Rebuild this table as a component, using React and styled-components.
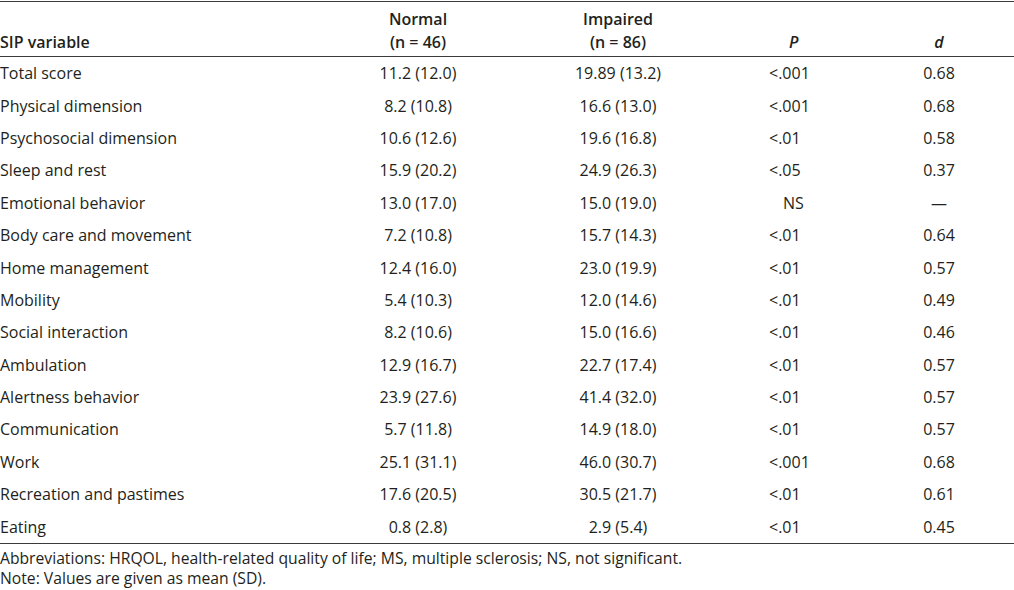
import React from 'react'
import styled, { createGlobalStyle } from 'styled-components'

const rows = [
    ['Total score', '11.2 (12.0)', '19.89 (13.2)', '<.001', '0.68'],
    ['Physical dimension', '8.2 (10.8)', '16.6 (13.0)', '<.001', '0.68'],
    ['Psychosocial dimension', '10.6 (12.6)', '19.6 (16.8)', '<.01', '0.58'],
    ['Sleep and rest', '15.9 (20.2)', '24.9 (26.3)', '<.05', '0.37'],
    ['Emotional behavior', '13.0 (17.0)', '15.0 (19.0)', 'NS', '—'],
    ['Body care and movement', '7.2 (10.8)', '15.7 (14.3)', '<.01', '0.64'],
    ['Home management', '12.4 (16.0)', '23.0 (19.9)', '<.01', '0.57'],
    ['Mobility', '5.4 (10.3)', '12.0 (14.6)', '<.01', '0.49'],
    ['Social interaction', '8.2 (10.6)', '15.0 (16.6)', '<.01', '0.46'],
    ['Ambulation', '12.9 (16.7)', '22.7 (17.4)', '<.01', '0.57'],
    ['Alertness behavior', '23.9 (27.6)', '41.4 (32.0)', '<.01', '0.57'],
    ['Communication', '5.7 (11.8)', '14.9 (18.0)', '<.01', '0.57'],
    ['Work', '25.1 (31.1)', '46.0 (30.7)', '<.001', '0.68'],
    ['Recreation and pastimes', '17.6 (20.5)', '30.5 (21.7)', '<.01', '0.61'],
    ['Eating', '0.8 (2.8)', '2.9 (5.4)', '<.01', '0.45'],
]

const Global = createGlobalStyle`
    body {
        margin: 0;
        background: #ffffff;
        color: #231f20;
        font-family: 'Open Sans', 'Noto Sans', sans-serif;
    }
`

const Page = styled.div`
    width: 1014px;
    padding-top: 1px;
`

const Table = styled.table`
    width: 1014px;
    border-collapse: collapse;
    table-layout: fixed;
    font-size: 16px;
    border-top: 1.5px solid #3a3a3a;
    border-bottom: 1.5px solid #3a3a3a;
`

const Th = styled.th`
    font-weight: 600;
    line-height: 23px;
    height: 52px;
    padding: 0;
    vertical-align: bottom;
    padding-bottom: 2px;
    text-align: ${p => p.$align || 'center'};
    padding-left: ${p => p.$pad || 0}px;
    font-style: ${p => (p.$italic ? 'italic' : 'normal')};
    border-bottom: 1.5px solid #3a3a3a;
`

const Td = styled.td`
    height: 32.4px;
    padding: 0;
    font-weight: 400;
    text-align: ${p => p.$align || 'center'};
    padding-left: ${p => p.$pad || 0}px;
`

const Foot = styled.div`
    font-size: 15.7px;
    line-height: 20px;
    padding-top: 4px;
`

export default function App() {
    return (
        <Page>
            <Global />
            <Table>
                <colgroup>
                    <col style={{ width: 330 }} />
                    <col style={{ width: 176 }} />
                    <col style={{ width: 224 }} />
                    <col style={{ width: 134 }} />
                    <col style={{ width: 150 }} />
                </colgroup>
                <thead>
                    <tr>
                        <Th $align="left">SIP variable</Th>
                        <Th>Normal<br />(n = 46)</Th>
                        <Th>Impaired<br />(n = 86)</Th>
                        <Th $italic $align="left" $pad={59}>P</Th>
                        <Th $italic>d</Th>
                    </tr>
                </thead>
                <tbody>
                    {rows.map(r => (
                        <tr key={r[0]}>
                            <Td $align="left">{r[0]}</Td>
                            <Td>{r[1]}</Td>
                            <Td>{r[2]}</Td>
                            <Td $align="left" $pad={r[3] === 'NS' ? 53 : 39}>{r[3]}</Td>
                            <Td>{r[4]}</Td>
                        </tr>
                    ))}
                </tbody>
            </Table>
            <Foot>
                Abbreviations: HRQOL, health-related quality of life; MS, multiple sclerosis; NS, not significant.
                <br />
                Note: Values are given as mean (SD).
            </Foot>
        </Page>
    )
}
